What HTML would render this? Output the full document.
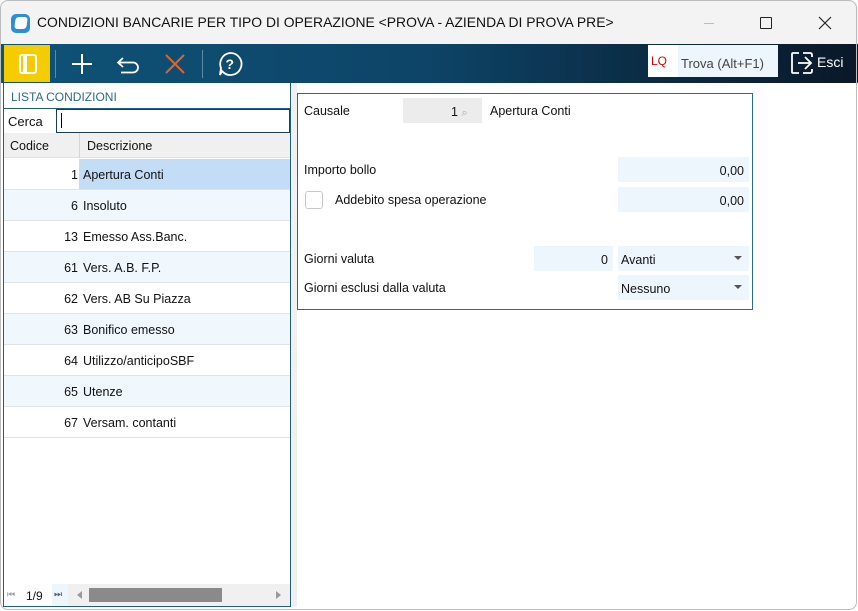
<!DOCTYPE html>
<html><head><style>
*{margin:0;padding:0;box-sizing:border-box}
body{width:858px;height:611px;background:#fff;font-family:"Liberation Sans","DejaVu Sans",sans-serif;font-size:12px;color:#111;position:relative;overflow:hidden}
.win{position:absolute;left:0;top:0;width:858px;height:611px;background:#fff;overflow:hidden;border-radius:8px}
.frame{position:absolute;left:0;top:0;width:857px;height:610px;border:1px solid #bdbdbd;border-radius:8px;z-index:10;pointer-events:none}
.title{position:absolute;left:0;top:0;width:858px;height:44px;background:#f3f3f3}
.title .t{position:absolute;left:37px;top:14px;font-size:13.9px;color:#111}
.tb{position:absolute;left:0;top:44px;width:858px;height:39px;background:linear-gradient(90deg,#0f5378 0%,#0d4467 50%,#0b2c45 75%,#0a1828 100%)}
.abs{position:absolute}
.lp{position:absolute;left:3px;top:83px;width:288px;height:524px;border:1px solid #1f5e7e;border-top:none;background:#fff}
.gap{position:absolute;left:291px;top:83px;width:6px;height:524px;background:#f0f0f0}
.row{position:absolute;left:0;width:286px;height:31px;border-bottom:1px solid #dde3e8;font-size:12.5px}
.row .c{position:absolute;left:0;width:74px;text-align:right;top:9px}
.row .d{position:absolute;left:75px;top:0;height:30px;width:211px;padding:9px 0 0 4px}
.alt{background:#f0f7fd}
.rp{position:absolute;left:297px;top:93px;width:456px;height:217px;border:1px solid #2a6a8c;background:#fff;font-size:12.5px}
.fld{position:absolute;background:#eef6fd;height:25px;text-align:right;padding:7px 5px 0 0}
</style></head><body>
<div class="win">
<div class="title">
<div class="abs" style="left:11px;top:14px;width:19px;height:19px;background:#2b8fd8;border-radius:5px"><div style="position:absolute;left:4px;top:3px;width:12px;height:12px;background:#fff;border-radius:3px;transform:skewX(-8deg)"></div></div>
<div class="t">CONDIZIONI BANCARIE PER TIPO DI OPERAZIONE &lt;PROVA - AZIENDA DI PROVA PRE&gt;</div>
<div class="abs" style="left:704px;top:23px;width:10px;height:1px;background:#bbb"></div>
<div class="abs" style="left:760px;top:17px;width:12px;height:12px;border:1px solid #222;border-radius:1px"></div>
<svg class="abs" style="left:818px;top:16px" width="14" height="14"><path d="M1 1L13 13M13 1L1 13" stroke="#222" stroke-width="1.2"/></svg>
</div>
<div class="tb">
<div class="abs" style="left:4px;top:1px;width:46px;height:37px;background:#f5cc00"><div style="position:absolute;left:15px;top:9px;width:18px;height:20px;border:2px solid #fff;border-radius:3px"><div style="position:absolute;left:2px;top:0;width:4px;height:16px;background:#fff"></div></div></div>
<div class="abs" style="left:55px;top:6px;width:1px;height:28px;background:#5d8ba6"></div>
<svg class="abs" style="left:70px;top:8px" width="24" height="24"><path d="M12 2V22M2 12H22" stroke="#fff" stroke-width="2"/></svg>
<svg class="abs" style="left:116px;top:8px" width="26" height="24"><path d="M7 6L2 10.5L7 15M2 10.5H17A5 5 0 0 1 17 20.5H5" stroke="#fff" stroke-width="1.8" fill="none"/></svg>
<svg class="abs" style="left:164px;top:9px" width="22" height="22"><path d="M2 2L20 20M20 2L2 20" stroke="#e0632a" stroke-width="2"/></svg>
<div class="abs" style="left:202px;top:6px;width:1px;height:28px;background:#5d8ba6"></div>
<svg class="abs" style="left:217px;top:7px" width="26" height="26"><path d="M13 2A11 11 0 1 1 5 20L3 24L4 17A11 11 0 0 1 13 2Z" stroke="#fff" stroke-width="1.8" fill="none"/><text x="8.5" y="18" fill="#fff" font-size="14" font-weight="bold" font-family="Liberation Sans">?</text></svg>
<div class="abs" style="left:648px;top:1px;width:30px;height:32px;background:#fff;color:#d00;font-size:12px;padding:9px 0 0 3px">LQ</div>
<div class="abs" style="left:678px;top:1px;width:100px;height:32px;background:#eef6fd;color:#444;font-size:13px;padding:11px 0 0 3px">Trova (Alt+F1)</div>
<svg class="abs" style="left:790px;top:7px" width="24" height="24"><path d="M9 2H3Q2 2 2 3V21Q2 22 3 22H9" stroke="#fff" stroke-width="1.8" fill="none"/><path d="M8 12H20M15 6L21 12L15 18" stroke="#fff" stroke-width="1.8" fill="none"/><path d="M13 2H20Q22 2 22 4V6M13 22H20Q22 22 22 20V18" stroke="#fff" stroke-width="1.8" fill="none"/></svg>
<div class="abs" style="left:817px;top:10px;color:#fff;font-size:14px">Esci</div>
</div>
<div class="lp">
<div class="abs" style="left:7px;top:7px;color:#2a6a8c;font-size:12px">LISTA CONDIZIONI</div>
<div class="abs" style="left:0;top:25px;width:286px;height:1px;background:#1f5e7e"></div>
<div class="abs" style="left:4px;top:31px;font-size:13px">Cerca</div>
<div class="abs" style="left:52px;top:26px;width:234px;height:24px;border:1px solid #1f3f55"><div style="position:absolute;left:4px;top:3px;width:1px;height:15px;background:#000"></div></div>
<div class="abs" style="left:0;top:50px;width:286px;height:25px;background:#f0f0f0;border-bottom:1px solid #dde3e8"></div>
<div class="abs" style="left:75px;top:50px;width:1px;height:25px;background:#cfd6dc"></div>
<div class="abs" style="left:6px;top:56px;font-size:12.5px">Codice</div>
<div class="abs" style="left:83px;top:56px;font-size:12.5px">Descrizione</div>
<div class="row" style="top:76px"><div class="c">1</div><div class="d" style="background:#c4ddf6">Apertura Conti</div></div>
<div class="row alt" style="top:107px"><div class="c">6</div><div class="d">Insoluto</div></div>
<div class="row" style="top:138px"><div class="c">13</div><div class="d">Emesso Ass.Banc.</div></div>
<div class="row alt" style="top:169px"><div class="c">61</div><div class="d">Vers. A.B. F.P.</div></div>
<div class="row" style="top:200px"><div class="c">62</div><div class="d">Vers. AB Su Piazza</div></div>
<div class="row alt" style="top:231px"><div class="c">63</div><div class="d">Bonifico emesso</div></div>
<div class="row" style="top:262px"><div class="c">64</div><div class="d">Utilizzo/anticipoSBF</div></div>
<div class="row alt" style="top:293px"><div class="c">65</div><div class="d">Utenze</div></div>
<div class="row" style="top:324px"><div class="c">67</div><div class="d">Versam. contanti</div></div>
<div class="abs" style="left:0;top:501px;width:286px;height:22px;background:#fff"></div>
<div class="abs" style="left:3px;top:506px;font-size:9px;color:#8a9aa8">⏮</div>
<div class="abs" style="left:22px;top:506px;font-size:12px">1/9</div>
<div class="abs" style="left:48px;top:501px;width:16px;height:22px;background:#eef6fd;font-size:9px;color:#4a5a78;padding:5px 0 0 2px">⏭</div>
<div class="abs" style="left:64px;top:501px;width:222px;height:22px;background:#f0f0f0"></div>
<div class="abs" style="left:73px;top:508px;width:0;height:0;border-top:4px solid transparent;border-bottom:4px solid transparent;border-right:5px solid #999"></div>
<div class="abs" style="left:85px;top:505px;width:133px;height:14px;background:#8a8a8a"></div>
<div class="abs" style="left:272px;top:508px;width:0;height:0;border-top:4px solid transparent;border-bottom:4px solid transparent;border-left:5px solid #999"></div>
</div>
<div class="gap"></div>
<div class="rp">
<div class="abs" style="left:6px;top:10px">Causale</div>
<div class="abs" style="left:105px;top:4px;width:79px;height:25px;background:#ececec;padding:7px 0 0 48px">1 <span style="color:#aaa;font-size:11px">⌕</span></div>
<div class="abs" style="left:192px;top:10px">Apertura Conti</div>
<div class="abs" style="left:6px;top:69px">Importo bollo</div>
<div class="fld" style="left:320px;top:63px;width:131px">0,00</div>
<div class="abs" style="left:7px;top:97px;width:18px;height:18px;border:1px solid #c8c8c8;border-radius:3px"></div>
<div class="abs" style="left:37px;top:99px">Addebito spesa operazione</div>
<div class="fld" style="left:320px;top:93px;width:131px">0,00</div>
<div class="abs" style="left:6px;top:158px">Giorni valuta</div>
<div class="fld" style="left:236px;top:152px;width:79px">0</div>
<div class="fld" style="left:320px;top:152px;width:131px;text-align:left;padding-left:3px">Avanti<div style="position:absolute;right:7px;top:10px;border-left:4px solid transparent;border-right:4px solid transparent;border-top:4px solid #555"></div></div>
<div class="abs" style="left:6px;top:187px">Giorni esclusi dalla valuta</div>
<div class="fld" style="left:320px;top:181px;width:131px;text-align:left;padding-left:3px">Nessuno<div style="position:absolute;right:7px;top:10px;border-left:4px solid transparent;border-right:4px solid transparent;border-top:4px solid #555"></div></div>
</div>
</div>
<div class="frame"></div>
</body></html>
